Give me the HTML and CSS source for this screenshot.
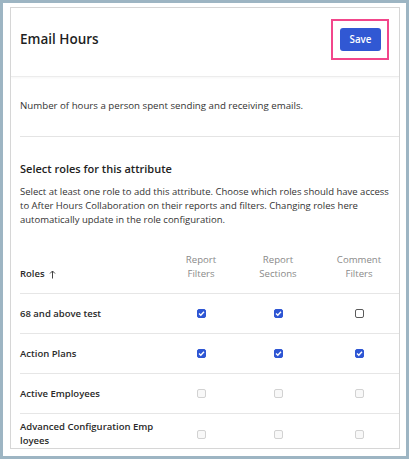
FILE: index.html
```html
<!DOCTYPE html>
<html lang="en">
<head>
<meta charset="utf-8">
<title>Email Hours</title>
<link rel="stylesheet" href="styles.css">
</head>
<body>
<div class="frame">
  <div class="panel">
    <header class="panel-header">
      <h1 class="title">Email Hours</h1>
      <div class="focus-ring"><button class="btn-save" type="button">Save</button></div>
    </header>
    <div class="panel-body">
      <p class="desc">Number of hours a person spent sending and receiving emails.</p>
      <div class="divider"></div>
      <h2 class="section-title">Select roles for this attribute</h2>
      <p class="help">Select at least one role to add this attribute. Choose which roles should have access to After Hours Collaboration on their reports and filters. Changing roles here automatically update in the role configuration.</p>
      <div class="roles">
        <div class="roles-row roles-head">
          <div class="role-col">Roles <svg class="sort" width="7" height="9" viewBox="0 0 7 9"><path d="M3.5 8.5V1M1 3.5L3.5 1L6 3.5" fill="none" stroke="#444" stroke-width="1"/></svg></div>
          <div class="col-head">Report<br>Filters</div>
          <div class="col-head">Report<br>Sections</div>
          <div class="col-head">Comment<br>Filters</div>
        </div>
        <div class="roles-row">
          <div class="role-col"><span class="role-name">68 and above test</span></div>
          <div class="cell"><span class="cb checked"><svg width="9" height="9" viewBox="0 0 9 9"><path d="M2 4.6L3.8 6.3L7 2.8" fill="none" stroke="#fff" stroke-width="1.4"/></svg></span></div>
          <div class="cell"><span class="cb checked"><svg width="9" height="9" viewBox="0 0 9 9"><path d="M2 4.6L3.8 6.3L7 2.8" fill="none" stroke="#fff" stroke-width="1.4"/></svg></span></div>
          <div class="cell"><span class="cb"></span></div>
        </div>
        <div class="roles-row">
          <div class="role-col"><span class="role-name">Action Plans</span></div>
          <div class="cell"><span class="cb checked"><svg width="9" height="9" viewBox="0 0 9 9"><path d="M2 4.6L3.8 6.3L7 2.8" fill="none" stroke="#fff" stroke-width="1.4"/></svg></span></div>
          <div class="cell"><span class="cb checked"><svg width="9" height="9" viewBox="0 0 9 9"><path d="M2 4.6L3.8 6.3L7 2.8" fill="none" stroke="#fff" stroke-width="1.4"/></svg></span></div>
          <div class="cell"><span class="cb checked"><svg width="9" height="9" viewBox="0 0 9 9"><path d="M2 4.6L3.8 6.3L7 2.8" fill="none" stroke="#fff" stroke-width="1.4"/></svg></span></div>
        </div>
        <div class="roles-row">
          <div class="role-col"><span class="role-name">Active Employees</span></div>
          <div class="cell"><span class="cb disabled"></span></div>
          <div class="cell"><span class="cb disabled"></span></div>
          <div class="cell"><span class="cb disabled"></span></div>
        </div>
        <div class="roles-row">
          <div class="role-col"><span class="role-name">Advanced Configuration Employees</span></div>
          <div class="cell"><span class="cb disabled"></span></div>
          <div class="cell"><span class="cb disabled"></span></div>
          <div class="cell"><span class="cb disabled"></span></div>
        </div>
      </div>
    </div>
  </div>
  <p class="next">Now assign the people who should see this attribute.</p>
</div>
</body>
</html>
```
FILE: styles.css
```css
* { box-sizing: border-box; }
html, body { margin: 0; padding: 0; }
body {
  background: #9db5c3;
  font-family: "Open Sans", "Noto Sans", sans-serif;
  width: 409px;
  height: 459px;
  overflow: hidden;
}
.frame {
  margin: 3px;
  width: 403px;
  height: 453px;
  background: #fff;
  padding: 4px 0 0 7px;
  overflow: hidden;
}
.panel {
  width: 390px;
  height: 442px;
  border: 1px solid #d6d6d6;
  display: flex;
  flex-direction: column;
  overflow: hidden;
}
.panel-header {
  height: 69px;
  flex: none;
  display: flex;
  align-items: center;
  justify-content: space-between;
  padding: 0 10px 6px 9px;
  border-bottom: 1px solid #ececec;
  box-shadow: 0 1px 2px rgba(0,0,0,0.04);
}
.title {
  margin: 0;
  font-size: 13.5px;
  font-weight: 600;
  color: #1f1f1f;
}
.focus-ring {
  border: 2px solid #f2468b;
  padding: 7px 6px 7px 7px;
}
.btn-save {
  display: block;
  width: 41px;
  height: 23px;
  border: none;
  border-radius: 3px;
  background: #3158d3;
  color: #fff;
  font-family: inherit;
  font-size: 9.8px;
  font-weight: 600;
  padding: 0;
}
.panel-body {
  flex: 1;
  overflow: hidden;
  padding: 21px 0 0 9px;
  width: 400px;
}
.desc {
  margin: 0;
  font-size: 9.7px;
  line-height: 16px;
  color: #333;
}
.divider {
  height: 1px;
  background: #e4e4e4;
  margin-top: 22px;
}
.section-title {
  margin: 23px 0 0;
  font-size: 11px;
  line-height: 18px;
  font-weight: 600;
  color: #222;
}
.help {
  margin: 7px 0 0;
  width: 380px;
  font-size: 9.5px;
  line-height: 14px;
  color: #333;
}
.roles {
  margin-top: 26px;
}
.roles-row {
  display: grid;
  grid-template-columns: 150px 62px 92px 70px 20px;
  align-items: center;
  min-height: 40px;
  border-bottom: 1px solid #e6e6e6;
}
.roles-head {
  align-items: end;
  padding-bottom: 12px;
}
.role-col {
  font-size: 9.5px;
  font-weight: 600;
  color: #2a2a2a;
  line-height: 14px;
  display: flex;
  align-items: center;
  gap: 4px;
}
.role-name {
  display: block;
  width: 134.5px;
  word-break: break-all;
  padding: 6px 0;
}
.sort { display: block; }
.col-head {
  text-align: center;
  font-size: 9.6px;
  line-height: 14px;
  color: #8a8a8a;
}
.cell {
  display: flex;
  justify-content: center;
}
.cb {
  display: block;
  width: 9px;
  height: 9px;
  border: 1px solid #5a5a5a;
  border-radius: 2px;
  background: #fff;
  position: relative;
}
.cb svg {
  position: absolute;
  left: -1px;
  top: -1px;
}
.cb.checked {
  background: #2e56d4;
  border-color: #2e56d4;
}
.cb.disabled {
  border-color: #d2d2d2;
  background: #f8f8f8;
}
.next {
  margin: 5px 0 0 9px;
  font-size: 9.7px;
  line-height: 14px;
  color: #444;
}
```
